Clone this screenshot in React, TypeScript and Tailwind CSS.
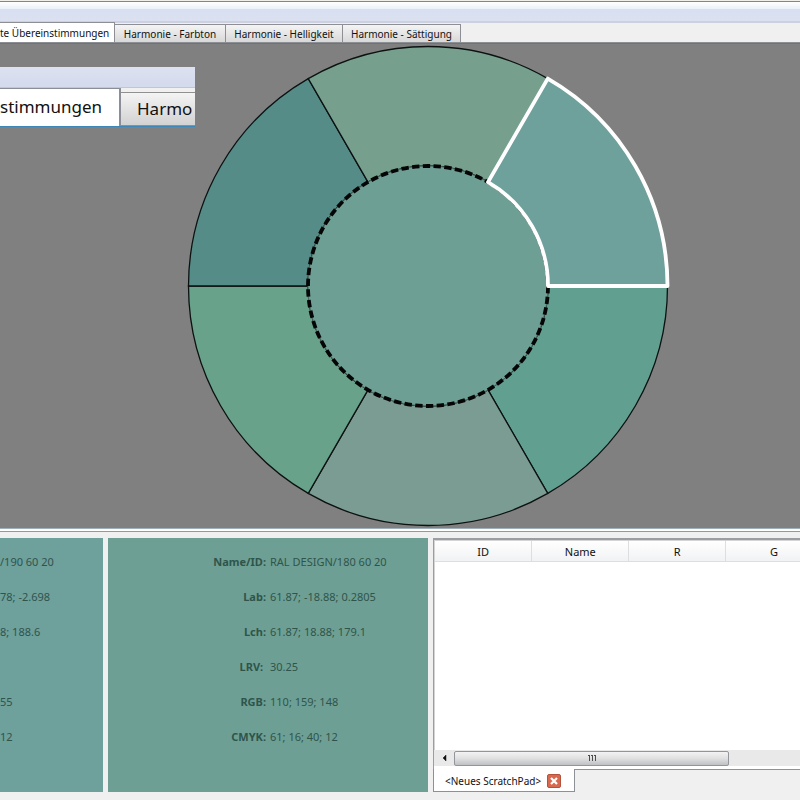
import React, { useState } from "react";

const TABS = [
  "te Übereinstimmungen",
  "Harmonie - Farbton",
  "Harmonie - Helligkeit",
  "Harmonie - Sättigung",
];

// clockwise, starting at one o'clock
const SEGMENTS = [
  { id: "ur", from: -60, color: "#6ea09c" },
  { id: "r", from: 0, color: "#61a091" },
  { id: "b", from: 60, color: "#7b9c93" },
  { id: "l", from: 120, color: "#69a28b" },
  { id: "ul", from: 180, color: "#558c87" },
  { id: "t", from: 240, color: "#76a08d" },
];

const DETAILS = [
  { label: "Name/ID:", value: "RAL DESIGN/180 60 20", left: "/190 60 20" },
  { label: "Lab:", value: "61.87; -18.88; 0.2805", left: "78; -2.698" },
  { label: "Lch:", value: "61.87; 18.88; 179.1", left: "8; 188.6" },
  { label: "LRV:\u00a0", value: "30.25", left: "" },
  { label: "RGB:", value: "110; 159; 148", left: "55" },
  { label: "CMYK:", value: "61; 16; 40; 12", left: "12" },
];

const COLUMNS = ["ID", "Name", "R", "G"];

const OUTER = 239.5;
const INNER = 120;

function point(radius: number, angle: number) {
  const rad = (angle * Math.PI) / 180;
  return `${radius * Math.cos(rad)} ${radius * Math.sin(rad)}`;
}

function segmentPath(from: number) {
  const to = from + 60;
  return `M${point(INNER, from)} L${point(OUTER, from)} A${OUTER} ${OUTER} 0 0 1 ${point(OUTER, to)} L${point(INNER, to)} A${INNER} ${INNER} 0 0 0 ${point(INNER, from)} Z`;
}

function ColorWheel() {
  const [selected, setSelected] = useState("ur");
  const active = SEGMENTS.find((s) => s.id === selected);

  return (
    <svg viewBox="-242 -242 484 484" className="w-[484px] h-[484px] shrink-0">
      {SEGMENTS.map((s) => (
        <path
          key={s.id}
          d={segmentPath(s.from)}
          fill={s.color}
          stroke="#0c1211"
          strokeWidth="1.3"
          onClick={() => setSelected(s.id)}
        />
      ))}
      <circle r={INNER} fill="#6e9f94" stroke="#4d7068" strokeWidth="1" />
      <circle
        r={INNER}
        fill="none"
        stroke="#050505"
        strokeWidth="3.8"
        strokeDasharray="7.4 3.37"
      />
      {active && (
        <path
          d={segmentPath(active.from)}
          fill={active.color}
          stroke="#fff"
          strokeWidth="3.8"
          strokeLinejoin="round"
        />
      )}
    </svg>
  );
}

function Tabs() {
  const [current, setCurrent] = useState(0);

  return (
    <div className="flex items-end h-5 shrink-0 bg-[#f0f0f0] border-b border-[#8c9094]">
      {TABS.map((tab, i) => (
        <button
          key={tab}
          type="button"
          onClick={() => setCurrent(i)}
          className={`shrink-0 text-[10px] leading-4 whitespace-nowrap border-r border-t border-[#8d8f94]
            ${i === 0 ? "w-[115px] pr-2 text-right" : "text-center"}
            ${i === 1 ? "w-[111px]" : ""}
            ${i === 2 ? "w-[117px]" : ""}
            ${i === 3 ? "w-[118px]" : ""}
            ${
              i === current
                ? "h-5 bg-white"
                : "h-[18px] bg-gradient-to-b from-[#f4f4f4] to-[#d8d8d8]"
            }`}
        >
          {tab}
        </button>
      ))}
    </div>
  );
}

// Enlarged detail of the tab bar, lies over the canvas
function TabDetail() {
  return (
    <div className="absolute left-0 top-[23px] w-[195px] h-[60px] overflow-hidden flex flex-col bg-[#f0f0f0] border-b border-[#3d86b8]">
      <div className="h-[21px] shrink-0 bg-gradient-to-b from-[#dde2f1] to-[#d3daec] border-b border-[#c3c5d2]" />
      <div className="flex-1 flex items-end">
        <div className="w-[121px] h-full shrink-0 bg-white border-t border-r-2 border-[#8b8d97] pr-5 text-right text-[17px] leading-9 whitespace-nowrap">
          stimmungen
        </div>
        <div className="flex-1 h-full border-b-2 border-white pt-1">
          <div className="h-full bg-gradient-to-b from-[#f4f4f4] to-[#d2d2d2] border-y border-[#909090] pl-4 text-[17px] leading-8 whitespace-nowrap">
            Harmo
          </div>
        </div>
      </div>
    </div>
  );
}

function ScratchPad() {
  return (
    <section className="flex-1 min-w-0 flex flex-col">
      <div className="flex-1 min-h-0 overflow-hidden flex flex-col bg-white border-l border-t-2 border-[#9a9da1]">
        <div className="flex-1 overflow-hidden border-t border-l border-[#d4d4d4]">
          <table className="w-[388px] table-fixed border-collapse text-[11px] leading-4">
            <thead>
              <tr className="h-5 bg-gradient-to-b from-white to-[#f1f2f4]">
                {COLUMNS.map((col) => (
                  <th
                    key={col}
                    className="pt-0.5 pb-0 font-normal border-r border-b border-[#dcdee0]"
                  >
                    {col}
                  </th>
                ))}
              </tr>
            </thead>
            <tbody />
          </table>
        </div>
        <div className="h-4 shrink-0 flex items-center bg-[#e9e9e9]">
          <button
            type="button"
            aria-label="Nach links"
            className="w-5 flex justify-center"
          >
            <svg viewBox="0 0 5 8" className="w-[5px] h-2">
              <path d="M4 1 L1 4 L4 7 Z" fill="#111" stroke="#111" strokeWidth="0.5" />
            </svg>
          </button>
          <div className="w-[275px] h-[15px] flex items-center justify-center gap-px rounded-xs border border-[#92959a] bg-gradient-to-b from-[#f3f3f3] via-[#e0e0e0] to-[#bfc1c4]">
            <span className="w-[2px] h-[6px] border-t border-r border-[#4c4c4c]" />
            <span className="w-[2px] h-[6px] border-t border-r border-[#4c4c4c]" />
            <span className="w-[2px] h-[6px] border-t border-r border-[#4c4c4c]" />
          </div>
        </div>
        <div className="h-[3px] shrink-0 bg-white" />
      </div>
      <div className="flex h-[23px] shrink-0">
        <div className="w-[142px] shrink-0 flex items-center gap-1.5 pl-[11px] pt-0.5 bg-white border-l border-b border-r border-[#8d9094] text-[10px] leading-4 whitespace-nowrap">
          <span>&lt;Neues ScratchPad&gt;</span>
          <button
            type="button"
            aria-label="Schließen"
            className="w-[14px] h-[14px] shrink-0 flex items-center justify-center rounded-xs border border-[#b4533c] bg-[#d9694e]"
          >
            <svg viewBox="0 0 8 8" className="w-2 h-2">
              <path d="M1 1 L7 7 M7 1 L1 7" stroke="#fff" strokeWidth="2.2" />
            </svg>
          </button>
        </div>
        <div className="flex-1 border-t border-[#8d9094]" />
      </div>
    </section>
  );
}

export default function App() {
  return (
    <div className="w-full h-screen overflow-hidden flex flex-col bg-[#f0f0f0] text-[#111] font-['Noto_Sans',sans-serif]">
      {/* toolbar */}
      <header className="h-[23px] shrink-0 flex flex-col">
        <div className="h-[2px] bg-[#f0efe9] border-b border-[#858585]" />
        <div className="h-[7px] bg-gradient-to-b from-white to-[#eaf0f9]" />
        <div className="flex-1 bg-gradient-to-b from-[#d8dff0] to-[#dbe1f1] border-b-2 border-[#cdd0de]" />
      </header>
      <Tabs />

      {/* canvas */}
      <main className="relative flex-1 min-h-0 flex justify-center pl-[55px] bg-[#808080] border-t border-[#56789a]">
        <ColorWheel />
        <TabDetail />
      </main>

      <div className="h-[10px] shrink-0 flex flex-col">
        <div className="h-[3px] bg-white border-t border-[#9fb0ba]" />
        <div className="h-px bg-[#8f9a9e]" />
      </div>

      {/* colour details */}
      <div className="h-[254px] shrink-0 flex gap-[5px] mb-2">
        <section className="w-[103px] shrink-0 pt-1.5 bg-[#6ea09c] text-[11px] text-[#2f544e]">
          {DETAILS.map((d) => (
            <p key={d.label} className="h-[35px] leading-[35px] whitespace-nowrap">
              {d.left}
            </p>
          ))}
        </section>
        <section className="w-[320px] shrink-0 pt-1.5 bg-[#6e9f94] text-[11px] text-[#2f554b]">
          <dl>
            {DETAILS.map((d) => (
              <div key={d.label} className="flex gap-1 h-[35px] leading-[35px]">
                <dt className="w-[158px] text-right font-bold">{d.label}</dt>
                <dd className="whitespace-nowrap">{d.value}</dd>
              </div>
            ))}
          </dl>
        </section>
        <ScratchPad />
      </div>
    </div>
  );
}
